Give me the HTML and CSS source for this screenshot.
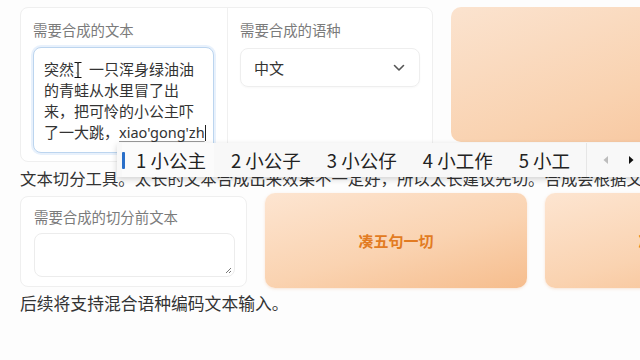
FILE: index.html
```html
<!DOCTYPE html>
<html lang="zh">
<head>
<meta charset="utf-8">
<title>TTS</title>
<link rel="stylesheet" href="styles.css">
</head>
<body>
<div class="page">
  <div class="row1">
    <div class="card card1">
      <div class="col col-text">
        <div class="label">需要合成的文本</div>
        <div class="textarea focused">
          <div class="line">突然，一只浑身绿油油</div>
          <div class="line">的青蛙从水里冒了出</div>
          <div class="line">来，把可怜的小公主吓</div>
          <div class="line">了一大跳，<span class="compose">xiao'gong'zh</span><span class="caret"></span></div>
        </div>
      </div>
      <div class="col col-lang">
        <div class="label">需要合成的语种</div>
        <div class="select">
          <span>中文</span>
          <svg class="chev" width="12" height="8" viewBox="0 0 12 8"><path d="M1.5 1.5 L6 6 L10.5 1.5" fill="none" stroke="#555" stroke-width="1.6" stroke-linecap="round" stroke-linejoin="round"/></svg>
        </div>
      </div>
    </div>
    <div class="orange orange-top"></div>
  </div>

  <p class="note">文本切分工具。太长的文本合成出来效果不一定好，所以太长建议先切。合成会根据文本的换行分开合成再拼起来。</p>

  <div class="row2">
    <div class="card card2">
      <div class="label">需要合成的切分前文本</div>
      <div class="textarea small">
        <svg class="grip" width="8" height="8" viewBox="0 0 8 8"><path d="M7 2 L2 7 M7 5 L5 7" stroke="#777" stroke-width="1" fill="none"/></svg>
      </div>
    </div>
    <div class="orange btn">凑五句一切</div>
    <div class="orange btn">凑五句一切</div>
  </div>

  <p class="note bottom">后续将支持混合语种编码文本输入。</p>
</div>

<div class="ime">
  <div class="cand active"><span class="mark"></span>1 小公主</div>
  <div class="cand">2 小公子</div>
  <div class="cand">3 小公仔</div>
  <div class="cand">4 小工作</div>
  <div class="cand">5 小工</div>
  <div class="ime-nav">
    <svg width="10" height="10" viewBox="0 0 10 10"><path d="M7 1 L2.5 5 L7 9 Z" fill="#bdbdbd"/></svg>
    <svg width="10" height="10" viewBox="0 0 10 10"><path d="M3 1 L7.5 5 L3 9 Z" fill="#111"/></svg>
  </div>
</div>

<svg class="ibeam" width="10" height="18" viewBox="0 0 10 18">
  <path d="M1.5 1.5 H4 M6 1.5 H8.5 M5 2 V16 M1.5 16.5 H4 M6 16.5 H8.5 M4 1.5 Q5 1.5 5 2.5 Q5 1.5 6 1.5 M4 16.5 Q5 16.5 5 15.5 Q5 16.5 6 16.5" stroke="#fff" stroke-width="3" fill="none" stroke-linecap="round"/>
  <path d="M1.5 1.5 H4 M6 1.5 H8.5 M5 2 V16 M1.5 16.5 H4 M6 16.5 H8.5 M4 1.5 Q5 1.5 5 2.5 Q5 1.5 6 1.5 M4 16.5 Q5 16.5 5 15.5 Q5 16.5 6 16.5" stroke="#111" stroke-width="1.2" fill="none"/>
</svg>
</body>
</html>
```

FILE: styles.css
```css
* { box-sizing: border-box; }
html, body {
  margin: 0;
  padding: 0;
  width: 640px;
  height: 360px;
  overflow: hidden;
  background: #fdfdfd;
  font-family: "Noto Sans CJK SC", "Noto Sans", sans-serif;
  color: #333;
}
.page {
  padding: 7px 0 0 20px;
  width: 1000px;
}
.row1 {
  display: flex;
  align-items: flex-start;
  gap: 18px;
}
.card {
  background: #fff;
  border: 1px solid #efefef;
  border-radius: 8px;
}
.card1 {
  display: flex;
  width: 413px;
  height: 155px;
}
.col {
  padding: 13px 12px 0 12px;
}
.col-text { width: 207px; }
.col-lang {
  width: 205px;
  border-left: 1px solid #f0f0f0;
}
.label {
  font-size: 14.4px;
  line-height: 18px;
  color: #7b7b7b;
}
.textarea {
  margin-top: 8px;
  border: 1px solid #e6e6e6;
  border-radius: 8px;
  background: #fff;
  position: relative;
}
.textarea.focused {
  width: 181px;
  height: 106px;
  border-color: #bcd5ef;
  box-shadow: 0 0 0 2px rgba(190, 215, 245, 0.35);
  padding: 10px 0 0 10px;
  font-size: 15px;
  line-height: 21px;
  color: #333;
}
.line { white-space: nowrap; }
.compose {
  text-decoration: underline;
  text-decoration-color: #999;
  text-underline-offset: 3px;
  font-family: "Noto Sans", sans-serif;
  font-size: 14.5px;
}
.caret {
  display: inline-block;
  width: 1px;
  height: 16px;
  background: #222;
  vertical-align: -3px;
}
.select {
  margin-top: 9px;
  width: 180px;
  height: 39px;
  border: 1px solid #eeeeee;
  border-radius: 8px;
  display: flex;
  align-items: center;
  justify-content: space-between;
  padding: 0 14px 0 13px;
  font-size: 15px;
  color: #333;
  box-shadow: 0 1px 2px rgba(0,0,0,0.03);
}
.orange {
  background: linear-gradient(160deg, #fbe3cf 0%, #f9d2b0 60%, #f7c39a 100%);
  border-radius: 10px;
}
.orange-top {
  width: 300px;
  height: 135px;
}
.note {
  margin: 4px 0 0 0;
  font-size: 16.4px;
  line-height: 24px;
  color: #333;
  white-space: nowrap;
}
.note.bottom {
  margin-top: 3px;
  font-size: 16.8px;
}
.row2 {
  margin-top: 3px;
  display: flex;
  align-items: flex-start;
  gap: 18px;
}
.card2 {
  margin-top: 3px;
  width: 227px;
  height: 91px;
  padding: 11px 12px 0 13px;
}
.textarea.small {
  margin-top: 7px;
  width: 201px;
  height: 44px;
  border-color: #ececec;
}
.grip {
  position: absolute;
  right: 2px;
  bottom: 2px;
}
.btn {
  width: 262px;
  height: 95px;
  display: flex;
  align-items: center;
  justify-content: center;
  font-size: 15px;
  font-weight: 700;
  color: #e27b22;
  background: linear-gradient(165deg, #fde5d1 0%, #fad3b1 55%, #f6bd8d 100%);
  box-shadow: 0 1px 3px rgba(230, 150, 90, 0.25);
}
.ime {
  position: absolute;
  left: 117px;
  top: 143px;
  width: 540px;
  height: 34px;
  background: #f8f8f8;
  box-shadow: 0 2px 6px rgba(0,0,0,0.18);
  display: flex;
  align-items: center;
  padding-left: 5px;
  font-size: 18.5px;
  color: #222;
}
.cand {
  display: flex;
  align-items: center;
  white-space: nowrap;
  margin-right: 26px;
  height: 34px;
}
.cand.active {
  background: #fbfbfb;
  padding-right: 8px;
  margin-right: 17px;
}
.mark {
  display: inline-block;
  width: 3px;
  height: 17px;
  background: #2a6fc9;
  border-radius: 1px;
  margin-right: 11px;
}
.ime-nav {
  display: flex;
  align-items: center;
  gap: 15px;
  height: 34px;
  margin-left: -10px;
  padding-left: 14px;
  border-left: 1px solid #e6e6e6;
}
.ibeam {
  position: absolute;
  left: 73px;
  top: 61px;
}
```
